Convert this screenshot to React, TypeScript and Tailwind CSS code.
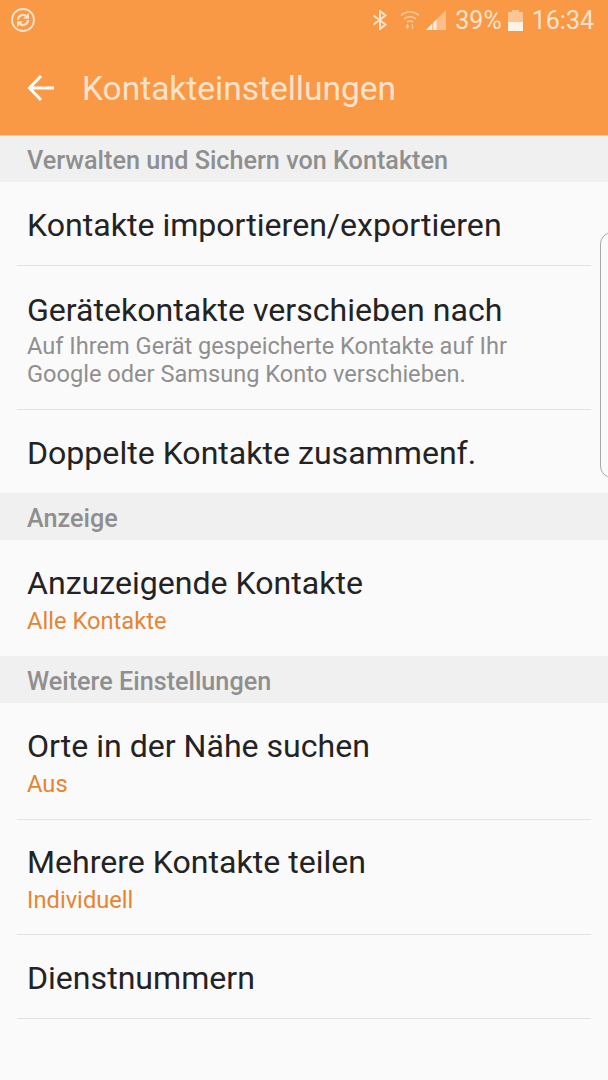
type Row = {
  title: string
  sub?: string
  value?: string
  h: string
  last?: boolean
}

type Section = {
  label: string
  h: string
  rows: Row[]
}

const sections: Section[] = [
  {
    label: 'Verwalten und Sichern von Kontakten',
    h: 'h-[46px] pt-[3px]',
    rows: [
      { title: 'Kontakte importieren/exportieren', h: 'h-[84px]' },
      {
        title: 'Gerätekontakte verschieben nach',
        sub: 'Auf Ihrem Gerät gespeicherte Kontakte auf Ihr Google oder Samsung Konto verschieben.',
        h: 'h-[144px]',
      },
      { title: 'Doppelte Kontakte zusammenf.', h: 'h-[83px]', last: true },
    ],
  },
  {
    label: 'Anzeige',
    h: 'h-[47px] pt-[4px]',
    rows: [{ title: 'Anzuzeigende Kontakte', value: 'Alle Kontakte', h: 'h-[116px]', last: true }],
  },
  {
    label: 'Weitere Einstellungen',
    h: 'h-[47px] pt-[4px]',
    rows: [
      { title: 'Orte in der Nähe suchen', value: 'Aus', h: 'h-[117px]' },
      { title: 'Mehrere Kontakte teilen', value: 'Individuell', h: 'h-[115px]' },
      { title: 'Dienstnummern', h: 'h-[84px]' },
    ],
  },
]

function SyncIcon() {
  return (
    <svg width="26" height="26" viewBox="0 0 26 26" fill="none" stroke="#fde3cc">
      <circle cx="13" cy="13" r="11" strokeWidth="1.8" />
      <path d="M8 13a5 5 0 0 1 8-4" strokeWidth="2.2" />
      <path d="M18 13a5 5 0 0 1-8 4" strokeWidth="2.2" />
      <path d="M19 5.8v6h-6z" fill="#fde3cc" stroke="none" />
      <path d="M7 20.2v-6h6z" fill="#fde3cc" stroke="none" />
    </svg>
  )
}

function StatusIcons() {
  return (
    <div className="flex items-center text-[#fde3cc]">
      <svg width="16" height="20" viewBox="0 0 16 20" fill="none" stroke="#fde3cc" strokeWidth="2" className="mr-[12px] ml-[2px]">
        <path d="M1.5 5.5l12 9-5.5 4.5V1l5.5 4.5-12 9" />
      </svg>
      <svg width="20" height="22" viewBox="0 0 20 22" fill="none" stroke="#fde3cc" strokeOpacity="0.6" strokeWidth="1.7" className="mr-[6px]">
        <path d="M1 6.5a13 13 0 0 1 18 0" />
        <path d="M4 10a9 9 0 0 1 12 0" />
        <path d="M7 13a5 5 0 0 1 6 0" />
        <path d="M7.5 15v5M5.6 17.5h3.8M12.5 20v-5" strokeWidth="1.4" />
      </svg>
      <svg width="20" height="20" viewBox="0 0 20 20" className="mr-[9px]">
        <path d="M0 20L20 0v20z" fill="#fde3cc" fillOpacity="0.5" />
        <path d="M0 20l6-6v6zM7.5 20v-7.5l3-3V20z" fill="#fff3e8" />
      </svg>
      <span className="text-[25px] leading-none">39%</span>
      <div className="ml-[6px] mr-[9px] flex h-[21px] w-[15px] flex-col">
        <div className="mx-auto h-[2px] w-[7px] bg-[#fde3cc]/60" />
        <div className="h-[10px] bg-[#fde3cc]/60" />
        <div className="h-[9px] bg-[#fff3e8]" />
      </div>
      <span className="text-[25px] leading-none">16:34</span>
    </div>
  )
}

export default function App() {
  return (
    <div className="relative h-[1080px] w-[608px] overflow-hidden bg-[#fafafa] font-['Roboto',sans-serif]">
      <header className="h-[136px] border-b border-[#d9d4cf] bg-[#f99845]">
        <div className="flex h-[40px] items-center justify-between pl-[10px] pr-[14px]">
          <SyncIcon />
          <StatusIcons />
        </div>
        <div className="flex h-[95px] items-center pl-[27px]">
          <svg width="28" height="28" viewBox="0 0 28 28" fill="none" stroke="#fff" strokeWidth="3">
            <path d="M27 14H3M14 2L2.5 14 14 26" />
          </svg>
          <h1 className="ml-[27px] mt-[3px] text-[33.5px] leading-none text-[#fde3cc]">Kontakteinstellungen</h1>
        </div>
      </header>

      {sections.map((section) => (
        <section key={section.label}>
          <div className={`flex items-center bg-[#f0f0f0] pl-[27px] text-[25.2px] font-medium text-[#8f8f8f] ${section.h}`}>
            {section.label}
          </div>
          {section.rows.map((row) => (
            <div
              key={row.title}
              className={`mx-[17px] flex w-[574px] flex-col justify-center pl-[10px] pt-[3px] ${row.last ? '' : 'border-b border-[#e3e3e3]'} ${row.h}`}
            >
              <div className="text-[32.1px] leading-[38px] text-[#232323]">{row.title}</div>
              {row.sub && (
                <p className="mt-[3px] w-[520px] text-[23.6px] leading-[28px] text-[#8f8f8f]">{row.sub}</p>
              )}
              {row.value && (
                <div className="mt-[4px] text-[23.7px] leading-[30px] text-[#e58534]">{row.value}</div>
              )}
            </div>
          ))}
        </section>
      ))}

      <div className="absolute left-[600px] top-[232px] h-[246px] w-[20px] rounded-l-[12px] border border-[#a8a8a8]" />
    </div>
  )
}
